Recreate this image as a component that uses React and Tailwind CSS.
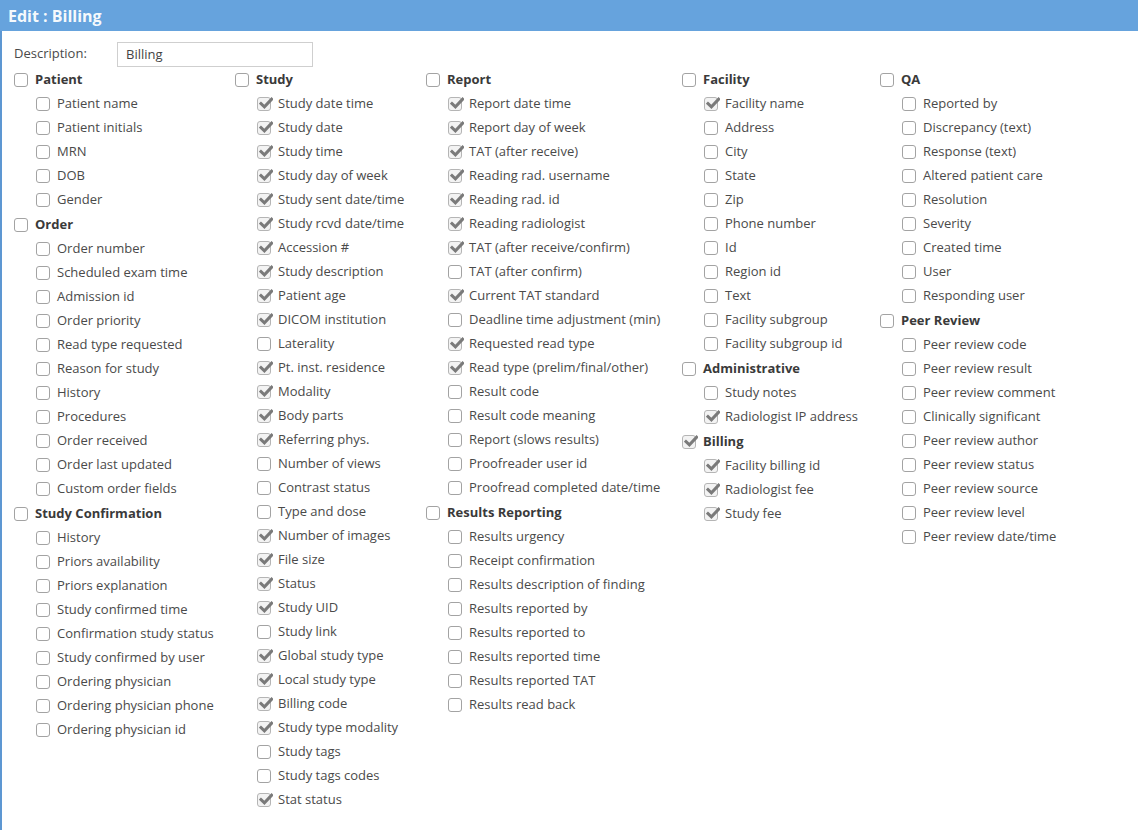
import React from 'react';

const columns = [
  {
    width: 'w-[221px]',
    groups: [
      {
        title: 'Patient',
        items: [
          ['Patient name', 0],
          ['Patient initials', 0],
          ['MRN', 0],
          ['DOB', 0],
          ['Gender', 0],
        ],
      },
      {
        title: 'Order',
        items: [
          ['Order number', 0],
          ['Scheduled exam time', 0],
          ['Admission id', 0],
          ['Order priority', 0],
          ['Read type requested', 0],
          ['Reason for study', 0],
          ['History', 0],
          ['Procedures', 0],
          ['Order received', 0],
          ['Order last updated', 0],
          ['Custom order fields', 0],
        ],
      },
      {
        title: 'Study Confirmation',
        items: [
          ['History', 0],
          ['Priors availability', 0],
          ['Priors explanation', 0],
          ['Study confirmed time', 0],
          ['Confirmation study status', 0],
          ['Study confirmed by user', 0],
          ['Ordering physician', 0],
          ['Ordering physician phone', 0],
          ['Ordering physician id', 0],
        ],
      },
    ],
  },
  {
    width: 'w-[191px]',
    groups: [
      {
        title: 'Study',
        items: [
          ['Study date time', 1],
          ['Study date', 1],
          ['Study time', 1],
          ['Study day of week', 1],
          ['Study sent date/time', 1],
          ['Study rcvd date/time', 1],
          ['Accession #', 1],
          ['Study description', 1],
          ['Patient age', 1],
          ['DICOM institution', 1],
          ['Laterality', 0],
          ['Pt. inst. residence', 1],
          ['Modality', 1],
          ['Body parts', 1],
          ['Referring phys.', 1],
          ['Number of views', 0],
          ['Contrast status', 0],
          ['Type and dose', 0],
          ['Number of images', 1],
          ['File size', 1],
          ['Status', 1],
          ['Study UID', 1],
          ['Study link', 0],
          ['Global study type', 1],
          ['Local study type', 1],
          ['Billing code', 1],
          ['Study type modality', 1],
          ['Study tags', 0],
          ['Study tags codes', 0],
          ['Stat status', 1],
        ],
      },
    ],
  },
  {
    width: 'w-[256px]',
    groups: [
      {
        title: 'Report',
        items: [
          ['Report date time', 1],
          ['Report day of week', 1],
          ['TAT (after receive)', 1],
          ['Reading rad. username', 1],
          ['Reading rad. id', 1],
          ['Reading radiologist', 1],
          ['TAT (after receive/confirm)', 1],
          ['TAT (after confirm)', 0],
          ['Current TAT standard', 1],
          ['Deadline time adjustment (min)', 0],
          ['Requested read type', 1],
          ['Read type (prelim/final/other)', 1],
          ['Result code', 0],
          ['Result code meaning', 0],
          ['Report (slows results)', 0],
          ['Proofreader user id', 0],
          ['Proofread completed date/time', 0],
        ],
      },
      {
        title: 'Results Reporting',
        items: [
          ['Results urgency', 0],
          ['Receipt confirmation', 0],
          ['Results description of finding', 0],
          ['Results reported by', 0],
          ['Results reported to', 0],
          ['Results reported time', 0],
          ['Results reported TAT', 0],
          ['Results read back', 0],
        ],
      },
    ],
  },
  {
    width: 'w-[198px]',
    groups: [
      {
        title: 'Facility',
        items: [
          ['Facility name', 1],
          ['Address', 0],
          ['City', 0],
          ['State', 0],
          ['Zip', 0],
          ['Phone number', 0],
          ['Id', 0],
          ['Region id', 0],
          ['Text', 0],
          ['Facility subgroup', 0],
          ['Facility subgroup id', 0],
        ],
      },
      {
        title: 'Administrative',
        items: [
          ['Study notes', 0],
          ['Radiologist IP address', 1],
        ],
      },
      {
        title: 'Billing',
        checked: true,
        items: [
          ['Facility billing id', 1],
          ['Radiologist fee', 1],
          ['Study fee', 1],
        ],
      },
    ],
  },
  {
    width: 'w-[240px]',
    groups: [
      {
        title: 'QA',
        items: [
          ['Reported by', 0],
          ['Discrepancy (text)', 0],
          ['Response (text)', 0],
          ['Altered patient care', 0],
          ['Resolution', 0],
          ['Severity', 0],
          ['Created time', 0],
          ['User', 0],
          ['Responding user', 0],
        ],
      },
      {
        title: 'Peer Review',
        items: [
          ['Peer review code', 0],
          ['Peer review result', 0],
          ['Peer review comment', 0],
          ['Clinically significant', 0],
          ['Peer review author', 0],
          ['Peer review status', 0],
          ['Peer review source', 0],
          ['Peer review level', 0],
          ['Peer review date/time', 0],
        ],
      },
    ],
  },
];

const Box = ({ checked }) => (
  <span
    className={`relative w-[14px] h-[14px] shrink-0 rounded-[3px] border flex items-center justify-center ${
      checked ? 'border-[#b5b5b5] bg-[#f3f3f3]' : 'border-[#a3a3a3] bg-white'
    }`}
  >
    {checked && (
      <svg className="absolute left-[1px] top-[-2px] w-[14px] h-[14px]" viewBox="0 0 14 14" fill="none">
        <path d="M2 7.6 L5.4 10.8 L12.6 3.2" stroke="#7a7a7a" strokeWidth="3" strokeLinecap="square" strokeLinejoin="miter" />
      </svg>
    )}
  </span>
);

const Row = ({ label, checked, bold }) => (
  <label className={`flex items-center gap-[7px] h-6 ${bold ? 'font-bold text-[#3a3a3a]' : 'text-[#4a4a4a]'}`}>
    <Box checked={checked} />
    <span className="whitespace-nowrap">{label}</span>
  </label>
);

export default function App() {
  return (
    <div
      className="w-[1138px] h-[830px] bg-white overflow-hidden text-[13px]"
      style={{ fontFamily: '"Open Sans", "Liberation Sans", sans-serif' }}
    >
      <div className="h-[31px] bg-[#66a3dd] flex items-center px-[8px]">
        <h1 className="text-white/95 font-bold text-[16px] m-0">Edit : Billing</h1>
      </div>
      <div className="border-l-2 border-[#5d97d2] h-[799px] pl-[12px] pt-[10px]">
        <div className="flex items-center h-[26px]">
          <span className="w-[103px] text-[#4a4a4a]">Description:</span>
          <input
            className="w-[196px] h-[25px] border border-[#cfcfcf] px-[8px] text-[13px] text-[#444] outline-none"
            defaultValue="Billing"
          />
        </div>
        <div className="flex items-start mt-px">
          {columns.map((col, ci) => (
            <div key={ci} className={col.width}>
              {col.groups.map((g, gi) => (
                <div key={gi} className={gi > 0 ? 'mt-px' : ''}>
                  <Row label={g.title} checked={g.checked} bold />
                  <div className="pl-[22px]">
                    {g.items.map(([label, c], ii) => (
                      <Row key={ii} label={label} checked={!!c} />
                    ))}
                  </div>
                </div>
              ))}
            </div>
          ))}
        </div>
      </div>
    </div>
  );
}
